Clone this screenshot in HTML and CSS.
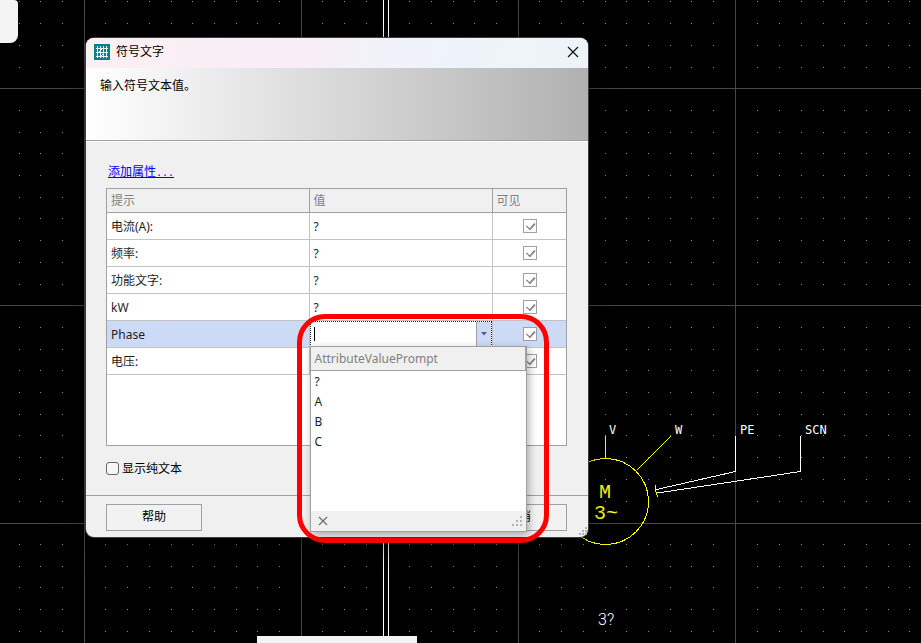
FILE: index.html
```
<!DOCTYPE html>
<html lang="zh-CN">
<head>
<meta charset="utf-8">
<title>符号文字</title>
<link rel="stylesheet" href="styles.css">
</head>
<body>
<main class="desktop">
  <svg class="canvas" aria-hidden="true">
    <defs>
      <path id="row" d="M21 .5h1m21 0h1m21 0h1m21 0h1m20 0h1m21 0h1m21 0h1m20 0h1m21 0h1" stroke="#8f8f8f"/>
      <g id="tile">
        <use href="#row" y="22"/><use href="#row" y="44"/><use href="#row" y="65"/>
        <use href="#row" y="87"/><use href="#row" y="109"/><use href="#row" y="130"/>
        <use href="#row" y="152"/><use href="#row" y="174"/><use href="#row" y="196"/>
      </g>
      <g id="band">
        <use href="#tile" x="-133"/><use href="#tile" x="84"/><use href="#tile" x="301"/>
        <use href="#tile" x="518"/><use href="#tile" x="736"/>
      </g>
    </defs>
    <use href="#band" y="-129"/><use href="#band" y="88"/><use href="#band" y="305"/><use href="#band" y="522"/>
    <path d="M84.500 0V2000M301.500 0V2000M518.500 0V2000M735.500 0V2000M0 88.500H4000M0 305.500H4000M0 523.500H4000" stroke="#484848"/>
    <path d="M383.500 0V2000M388.500 0V2000" stroke="#fff"/>
    <g fill="none" stroke="#ff0" shape-rendering="crispEdges">
      <circle cx="605.500" cy="501.500" r="43"/>
      <path d="M605.500 436V458M670.500 436.500L636.500 470.500M655.500 485V490L657.500 497"/>
    </g>
    <path d="M735.500 436V471.500L656.500 489.500M800.500 436V471.500L657.500 493" fill="none" stroke="#fff" shape-rendering="crispEdges"/>
    <g class="label">
      <text x="609" y="434">V</text>
      <text x="675" y="434">W</text>
      <text x="740" y="434">PE</text>
      <text x="805" y="434">SCN</text>
    </g>
    <text class="motor" x="599" y="498">M</text>
    <text class="motor" x="594" y="519">3~</text>
    <text class="phase" x="598" y="625">3?</text>
  </svg>

  <div class="panel panel-top"></div>
  <div class="panel panel-bottom"></div>

  <section class="dialog" aria-labelledby="dialog-title">
    <header class="titlebar">
      <svg class="app-icon" viewBox="0 0 16 16" aria-hidden="true">
        <rect width="16" height="16" fill="#087f8c"/>
        <path d="M2 4.500H14M2 8.500H14M2 12.500H14M3.500 2V14M6.500 2V14M9.500 2V14M12.500 2V14M5 8L9 4M7 12L11 8" stroke="#e4f4f5" fill="none"/>
      </svg>
      <h1 id="dialog-title">符号文字</h1>
      <button class="close" type="button" aria-label="关闭">
        <svg viewBox="0 0 12 12" aria-hidden="true"><path d="M1 1L11 11M11 1L1 11" stroke="#111" stroke-width="1.200"/></svg>
      </button>
    </header>
    <p class="banner">输入符号文本值。</p>

    <form class="content">
      <a class="add" href="#">添加属性<span>...</span></a>
      <div class="grid">
        <table>
          <thead><tr><th class="col-prompt">提示</th><th class="col-value">值</th><th>可见</th></tr></thead>
          <tbody>
            <tr><td>电流(A):</td><td>?</td><td class="tick"><input type="checkbox" checked aria-label="电流 可见"></td></tr>
            <tr><td>频率:</td><td>?</td><td class="tick"><input type="checkbox" checked aria-label="频率 可见"></td></tr>
            <tr><td>功能文字:</td><td>?</td><td class="tick"><input type="checkbox" checked aria-label="功能文字 可见"></td></tr>
            <tr><td>kW</td><td>?</td><td class="tick"><input type="checkbox" checked aria-label="kW 可见"></td></tr>
            <tr class="selected">
              <td>Phase</td>
              <td class="editing">
                <div class="combo">
                  <input type="text" aria-label="Phase">
                  <i class="caret"></i>
                  <button type="button" aria-label="展开"><svg viewBox="0 0 6 4" aria-hidden="true"><path d="M0 0H6L3 3.500Z" fill="#566380"/></svg></button>
                </div>
                <div class="popup">
                  <div class="popup-head">AttributeValuePrompt</div>
                  <ul><li>?</li><li>A</li><li>B</li><li>C</li></ul>
                  <div class="popup-foot">
                    <button type="button" aria-label="关闭列表"><svg viewBox="0 0 10 10" aria-hidden="true"><path d="M1 1L9 9M9 1L1 9" stroke="#707070" stroke-width="1.300"/></svg></button>
                    <svg class="grip" viewBox="0 0 10 10" aria-hidden="true"><path d="M8 0h2v2h-2zM4 4h2v2h-2zM8 4h2v2h-2zM0 8h2v2h-2zM4 8h2v2h-2zM8 8h2v2h-2z" fill="#b4b4b4"/></svg>
                  </div>
                </div>
              </td>
              <td class="tick"><input type="checkbox" checked aria-label="Phase 可见"></td>
            </tr>
            <tr><td>电压:</td><td></td><td class="tick"><input type="checkbox" checked aria-label="电压 可见"></td></tr>
          </tbody>
        </table>
      </div>
      <label class="plain"><input type="checkbox">显示纯文本</label>
    </form>

    <footer class="actions">
      <button type="button">帮助</button>
      <button type="button">取消</button>
      <svg class="grip corner" viewBox="0 0 10 10" aria-hidden="true"><path d="M7 1h2v2h-2zM4 4h2v2h-2zM7 4h2v2h-2zM1 7h2v2h-2zM4 7h2v2h-2zM7 7h2v2h-2z" fill="#b4b4b4"/></svg>
    </footer>
  </section>

  <div class="highlight"></div>
</main>
</body>
</html>
```
FILE: styles.css
```
* { box-sizing: border-box; }

body {
  margin: 0;
  background: #000;
  color: #1e1e1e;
  font: 12px/18px "Noto Sans", "Noto Sans CJK SC", sans-serif;
}

button, input { font: inherit; color: inherit; }
svg { display: block; }

.desktop {
  position: relative;
  height: 100vh;
  overflow: hidden;
}

.canvas {
  position: absolute;
  inset: 0;
  width: 100%;
  height: 100%;
}

.label { fill: #fff; font: 12px "DejaVu Sans Mono", monospace; }
.motor { fill: #ff0; font: 20px "Liberation Mono", monospace; }
.phase { fill: #fff; font: 300 16px Roboto, sans-serif; }

.panel { position: absolute; background: #f3f3f3; }
.panel-top { left: 0; top: 0; width: 18px; height: 43px; border-radius: 0 4px 8px 0; }
.panel-bottom { left: 257px; bottom: 0; width: 160px; height: 7px; }

.dialog {
  position: absolute;
  left: 86px;
  top: 38px;
  width: 502px;
  border-radius: 8px;
  background: #f0f0f0;
  box-shadow: 0 0 0 1px #3c3c3c, 0 8px 30px rgba(0, 0, 0, .5);
}

.titlebar {
  display: flex;
  align-items: center;
  gap: 6px;
  height: 30px;
  padding: 0 9px 2px 8px;
  border-radius: 8px 8px 0 0;
  background: linear-gradient(100deg, #faf0f2 0%, #f9edf8 43%, #f2f2f8 55%, #eef3fb 75%, #eff4f7 85%, #eef3fb 100%);
}

.titlebar h1 { margin: 0; flex: 1; color: #000; font-size: 12px; font-weight: 400; }
.app-icon { width: 16px; height: 16px; }
.close { padding: 0; border: 0; background: none; }
.close svg { width: 12px; height: 12px; }

.banner {
  height: 74px;
  margin: 0;
  padding: 9px 14px;
  border-bottom: 1px solid #fff;
  background: linear-gradient(#a0a0a0, #a0a0a0) bottom / 100% 1px no-repeat, linear-gradient(90deg, #fff, #b1b1b1);
  color: #000;
}

.content { padding: 21px 21px 17px 20px; }

.add { display: inline-block; margin-left: 2px; color: #00f; }
.add span { font: 10px "Liberation Mono", monospace; }

.grid {
  margin-top: 7px;
  padding-bottom: 70px;
  border: 1px solid #a0a0a0;
  background: #fff;
}

table { width: 100%; border-collapse: collapse; table-layout: fixed; }
.col-prompt { width: 202px; }
.col-value { width: 183px; }

th, td {
  padding: 2px 4px 0;
  border: 0 solid #c3c3c3;
  border-width: 0 1px 1px 0;
  text-align: left;
}

th {
  height: 23px;
  border-color: #a0a0a0;
  background: #f0f0f0;
  color: #808080;
  font-weight: 400;
}

td { height: 27px; }
td.tick { padding: 0 0 0 2px; }
th:last-child, td:last-child { border-right: 0; }

.tick input {
  display: block;
  width: 14px;
  height: 14px;
  margin: 0 auto;
  appearance: none;
  border: 1px solid #a0a0a0;
  background: #fff;
}

.tick input::before {
  content: "";
  display: block;
  width: 4px;
  height: 7px;
  margin: 1px 0 0 4px;
  border: solid #707070;
  border-width: 0 1px 1px 0;
  box-shadow: 1px 0 0 #a8a8a8;
  transform: rotate(42deg);
}

.selected td { background: #cddaf5; }
.selected .editing { position: relative; padding: 0; }

.combo {
  position: relative;
  display: flex;
  height: 26px;
  border: 1px dotted #222;
  background: #fff;
}

.combo input {
  flex: 1;
  min-width: 0;
  padding: 0 3px;
  border: 0;
  outline: 0;
  background: none;
}

.caret {
  position: absolute;
  left: 3px;
  top: 5px;
  width: 1px;
  height: 14px;
  background: #000;
}

.combo button {
  display: grid;
  place-items: center;
  width: 15px;
  padding: 0;
  border: 0;
  border-left: 1px solid #a0a0a0;
  background: #cddaf5;
}

.combo button svg { width: 6px; height: 4px; }

.popup {
  position: absolute;
  z-index: 1;
  left: 0;
  top: 25px;
  width: 217px;
  border: 1px solid #a0a0a0;
  background: #fff;
  box-shadow: 2px 3px 8px rgba(0, 0, 0, .3);
}

.popup-head {
  height: 24px;
  padding: 3px 4px;
  border: solid #a0a0a0;
  border-width: 0 1px 1px 0;
  background: #f0f0f0;
  color: #808080;
}

.popup ul { min-height: 140px; margin: 0; padding: 0; list-style: none; }
.popup li { padding: 2px 4px 0; }

.popup-foot {
  display: flex;
  justify-content: space-between;
  align-items: center;
  height: 20px;
  padding: 0 4px 0 7px;
  background: #f0f0f0;
}

.popup-foot button { padding: 0; border: 0; background: none; }
.popup-foot button svg { width: 10px; height: 10px; }
.grip { width: 10px; height: 10px; }

.plain {
  display: flex;
  align-items: center;
  gap: 3px;
  margin-top: 14px;
  color: #000;
}

.plain input {
  width: 13px;
  height: 13px;
  margin: 0;
  appearance: none;
  border: 1px solid #666;
  border-radius: 3px;
  background: #f6f6f6;
}

.actions {
  position: relative;
  display: flex;
  justify-content: space-between;
  padding: 8px 21px 6px 20px;
  border-top: 1px solid #a0a0a0;
}

.actions button {
  width: 96px;
  height: 27px;
  padding: 0;
  border: 1px solid #a0a0a0;
  background: #f2f2f2;
  color: #000;
}

.corner { position: absolute; right: 0; bottom: 1px; }

.highlight {
  position: absolute;
  left: 297px;
  top: 314px;
  width: 252px;
  height: 229px;
  border: 5px solid #f00;
  border-radius: 28px;
}
```
